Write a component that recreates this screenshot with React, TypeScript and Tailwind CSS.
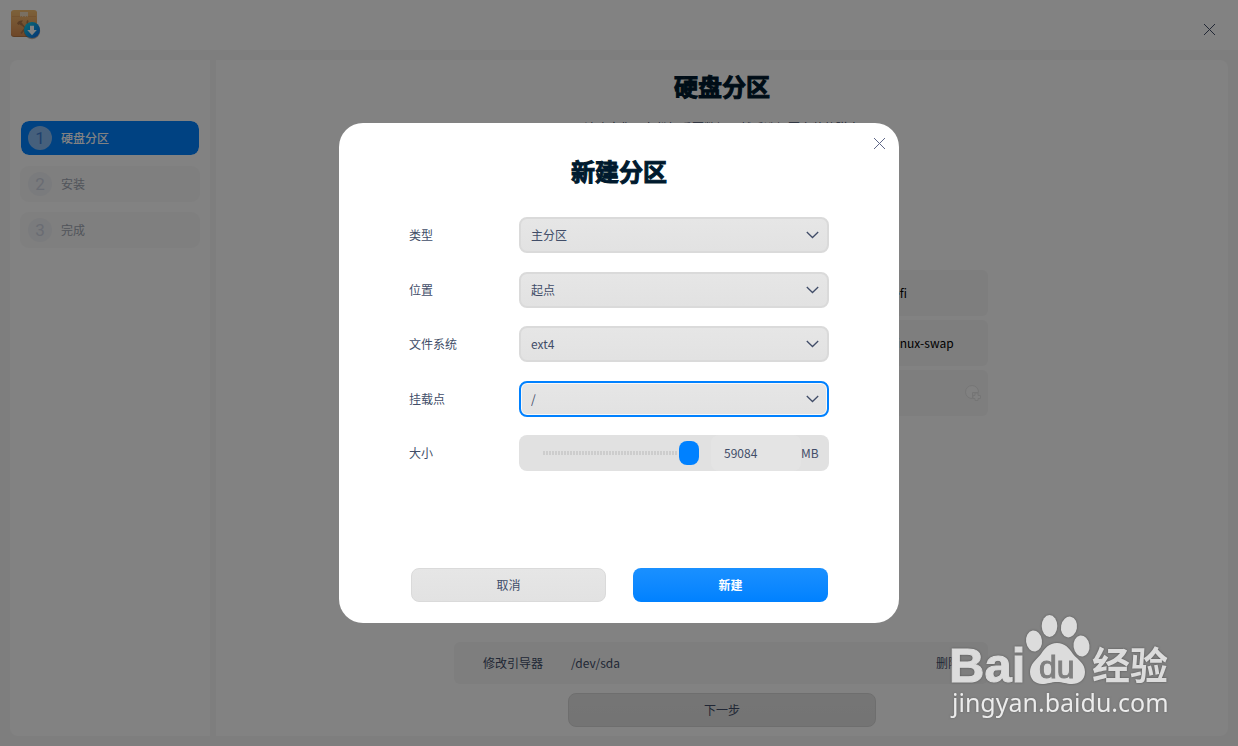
import { useState } from "react";
import type { ReactNode } from "react";

const steps = ["硬盘分区", "安装", "完成"];
const partitions = ["efi", "linux-swap", ""];

function InstallerIcon() {
  return (
    <svg width="32" height="32" viewBox="0 0 32 32" aria-hidden="true">
      <defs>
        <linearGradient id="box" x1="0" y1="0" x2="0" y2="1">
          <stop offset="0" stopColor="#f6bf72" />
          <stop offset="1" stopColor="#d98d51" />
        </linearGradient>
        <linearGradient id="badge" x1="0" y1="0" x2="1" y2="1">
          <stop offset="0" stopColor="#12d8e8" />
          <stop offset="1" stopColor="#0a62e6" />
        </linearGradient>
      </defs>
      <rect x="1" y="2" width="26" height="26" rx="3" fill="#b87844" />
      <rect x="1" y="1" width="26" height="26" rx="3" fill="url(#box)" />
      <path d="M2 7.500H26" stroke="#dfa05d" strokeWidth="0.8" />
      <path d="M10 3h8v5l-1.300-1-1.300 1-1.400-1-1.400 1-1.300-1-1.300 1z" fill="#f0dcc0" />
      <path d="M7 14.500c1-2.500 3-3.500 6-3l-1.500 2 1.500 1.500-1.800 1.800-1.500-1.500-1.200.7z" fill="#b0784a" />
      <path d="M12 15.500L20 24M11 24.500l7-9" fill="none" stroke="#b0784a" strokeWidth="1.800" />
      <path d="M18 11.500c-1.500 2-.5 4.500 2 4.500" fill="none" stroke="#b0784a" strokeWidth="1.800" />
      <circle cx="22" cy="22" r="8.200" fill="#7a5a42" opacity="0.5" />
      <circle cx="22" cy="21" r="8" fill="url(#badge)" />
      <path d="M20 16.800h4v4.200h2.800L22 26.200l-4.800-5.200H20z" fill="#fff" />
    </svg>
  );
}

function CloseIcon() {
  return (
    <svg width="13" height="13" viewBox="0 0 13 13" fill="none" stroke="currentColor" strokeWidth="1" aria-hidden="true">
      <path d="M1 1l11 11M12 1L1 12" />
    </svg>
  );
}

function AddIcon() {
  return (
    <svg width="16" height="16" viewBox="0 0 16 16" fill="none" aria-hidden="true">
      <path d="M7.500 13.500A6.500 6.500 0 1 1 13.500 7.500H7.500z" fill="#fdfdfd" stroke="#e6e6e6" />
      <path d="M10 8h3v2.500h2.500v3H13V15.500h-3V13.500H8v-3h2z" fill="#fdfdfd" stroke="#e6e6e6" />
    </svg>
  );
}

function Field({ id, label, children }: { id: string; label: string; children: ReactNode }) {
  return (
    <div className="flex h-9 items-center">
      <label htmlFor={id} className="w-[110px] shrink-0">
        {label}
      </label>
      <div className="relative h-9 flex-1">{children}</div>
    </div>
  );
}

function SelectField({ id, label, value, focused }: { id: string; label: string; value: string; focused?: boolean }) {
  return (
    <Field id={id} label={label}>
      <select
        id={id}
        defaultValue={value}
        className={
          "h-full w-full appearance-none rounded-lg border-2 bg-linear-to-b from-[#e6e6e6] to-[#e2e2e2] pl-2.5 pr-8 outline-none " +
          (focused ? "border-[#0081ff] shadow-[inset_0_0_0_1px_#f8f8f8]" : "border-[#dadada]")
        }
      >
        <option>{value}</option>
      </select>
      <svg
        className="pointer-events-none absolute top-3 right-2.5"
        width="13"
        height="12"
        viewBox="0 0 13 12"
        fill="none"
        stroke="#414d68"
        strokeWidth="1.3"
        aria-hidden="true"
      >
        <path d="M0.800 3l5.700 5.500L12.200 3" />
      </svg>
    </Field>
  );
}

function Watermark() {
  return (
    <div className="pointer-events-none absolute right-[66px] bottom-7 w-[222px] text-[#dcdcdc]">
      <svg width="222" height="74" viewBox="0 0 222 74" className="block overflow-visible" fill="#dcdcdc">
        <g className="drop-shadow-[0_0_1px_#555]">
          <text x="-1" y="70" fontFamily="Liberation Sans, sans-serif" fontWeight="700" fontSize="49" stroke="#dcdcdc" strokeWidth="1">
            Bai
          </text>
          <ellipse cx="84" cy="29" rx="8" ry="10.500" transform="rotate(-8 84 29)" />
          <ellipse cx="99.500" cy="14" rx="7.800" ry="11" />
          <ellipse cx="119" cy="15" rx="8" ry="10.500" transform="rotate(10 119 15)" />
          <ellipse cx="131.500" cy="34" rx="8" ry="10.500" transform="rotate(-8 131.500 34)" />
          <path d="M107 31c8 0 12 5 16 11 5 6 12 9 12 18 0 8-6 12-13 12-6 0-9-2-15-2s-9 2-15 2c-7 0-12-5-12-12 0-8 6-12 11-18 4-6 8-11 16-11z" />
          <text x="142" y="67" fontFamily="Noto Sans CJK SC, sans-serif" fontWeight="700" fontSize="38">
            经验
          </text>
        </g>
        <text x="89" y="66" fill="#808080" stroke="#808080" strokeWidth="1" fontFamily="Liberation Sans, sans-serif" fontSize="32">
          du
        </text>
      </svg>
      <p className="pl-0.5 font-['Noto_Sans'] text-[25px] leading-8 whitespace-nowrap text-[#ececec] drop-shadow-[0_0_1px_#666]">
        jingyan.baidu.com
      </p>
    </div>
  );
}

export default function App() {
  const [size, setSize] = useState(59084);

  return (
    <div className="flex min-h-screen flex-col bg-[#f8f8f8] font-['Noto_Sans_CJK_SC',sans-serif] text-xs text-[#414d68]">
      <header className="flex h-[50px] items-center justify-between bg-white pr-[22px] pl-2.5">
        <InstallerIcon />
        <button aria-label="关闭" className="mt-2">
          <CloseIcon />
        </button>
      </header>

      <div className="flex flex-1 gap-1.5 p-2.5">
        <aside className="w-[200px] shrink-0 rounded-l-lg bg-white px-2.5 pt-[60px]">
          <ol className="flex flex-col gap-2.5">
            {steps.map((step, i) => (
              <li
                key={step}
                className={
                  "flex h-9 items-center gap-[9px] rounded-[9px] " +
                  (i === 0
                    ? "border border-white bg-[#0081ff] bg-clip-padding pl-[7px] font-medium text-white"
                    : "bg-[#f9f9f9] pl-2 text-[#a0a6b3]")
                }
              >
                <span
                  className={
                    "flex size-6 items-center justify-center rounded-full font-[Roboto] text-[17px] font-normal " +
                    (i === 0 ? "bg-[#8abdf3] text-[#3f7fd4]" : "bg-[#f0f1f5] text-[#cfd4e2]")
                  }
                >
                  {i + 1}
                </span>
                {step}
              </li>
            ))}
          </ol>
        </aside>

        <main className="flex flex-1 flex-col items-center rounded-r-lg bg-white pt-2 pb-[9px]">
          <h1 className="text-2xl leading-9 font-bold text-[#001a2e] [-webkit-text-stroke:1px_#001a2e]">硬盘分区</h1>
          <p className="mt-3 leading-6">请确定您已备份好重要数据，然后选择要安装的磁盘</p>
          <ul className="mt-[130px] mr-0.5 flex w-[534px] flex-col gap-1">
            {partitions.map((fs) => (
              <li key={fs} className="flex h-[46px] items-center justify-end rounded-md bg-[#f7f7f7] pr-[7px] text-black">
                {fs ? <span className="w-[88px]">{fs}</span> : <AddIcon />}
              </li>
            ))}
          </ul>
          <div className="mt-auto mr-0.5 flex h-[42px] w-[534px] items-center rounded-md bg-[#f8f8f8] pr-7 pl-[29px]">
            <span>修改引导器</span>
            <span className="ml-7">/dev/sda</span>
            <a href="#delete" className="ml-auto">
              删除
            </a>
          </div>
          <button className="mt-[9px] h-[34px] w-[308px] rounded-lg border border-[#d8d8d8] bg-linear-to-b from-[#e6e6e6] to-[#e3e3e3]">
            下一步
          </button>
        </main>
      </div>

      <div className="fixed inset-0 flex items-center justify-center bg-black/49">
        <section
          role="dialog"
          aria-labelledby="dialog-title"
          className="relative flex h-[500px] w-[560px] flex-col rounded-3xl bg-white px-[70px] pt-[30px] pb-[21px]"
        >
          <button aria-label="关闭对话框" className="absolute top-3.5 right-[13px] text-[#5f6788]">
            <CloseIcon />
          </button>
          <h2
            id="dialog-title"
            className="text-center text-2xl leading-9 font-bold text-[#001a2e] [-webkit-text-stroke:1px_#001a2e]"
          >
            新建分区
          </h2>
          <form className="mt-7 flex h-[254px] flex-col justify-between">
            <SelectField id="type" label="类型" value="主分区" />
            <SelectField id="location" label="位置" value="起点" />
            <SelectField id="filesystem" label="文件系统" value="ext4" />
            <SelectField id="mount" label="挂载点" value="/" focused />
            <Field id="size" label="大小">
              <div className="flex h-full items-center rounded-lg bg-[#e1e1e1] pl-6">
                <input
                  type="range"
                  aria-label="分区大小"
                  min={0}
                  max={59084}
                  value={size}
                  onChange={(e) => setSize(Number(e.target.value))}
                  className="h-6 w-[156px] appearance-none bg-[repeating-linear-gradient(to_right,#cdcdcd_0_2px,transparent_2px_3px)] bg-[length:100%_4px] bg-center bg-no-repeat outline-none [&::-webkit-slider-thumb]:h-6 [&::-webkit-slider-thumb]:w-5 [&::-webkit-slider-thumb]:appearance-none [&::-webkit-slider-thumb]:rounded-lg [&::-webkit-slider-thumb]:bg-[#0081ff] [&::-webkit-slider-thumb]:shadow-[0_0_0_1px_#e1e1e1]"
                />
                <input
                  id="size"
                  value={size}
                  onChange={(e) => setSize(Number(e.target.value) || 0)}
                  className="ml-3 h-full w-[90px] rounded-lg bg-[#e4e4e4] pb-0.5 pl-[13px] outline-none"
                />
                <span>MB</span>
              </div>
            </Field>
          </form>
          <div className="mt-auto mr-px ml-0.5 grid grid-cols-2 gap-[27px]">
            <button className="h-[34px] rounded-lg border border-[#dadada] bg-linear-to-b from-[#e6e6e6] to-[#e2e2e2]">取消</button>
            <button className="h-[34px] rounded-lg bg-linear-to-b from-[#1a90ff] to-[#0081ff] font-bold text-white">新建</button>
          </div>
        </section>
        <Watermark />
      </div>
    </div>
  );
}
